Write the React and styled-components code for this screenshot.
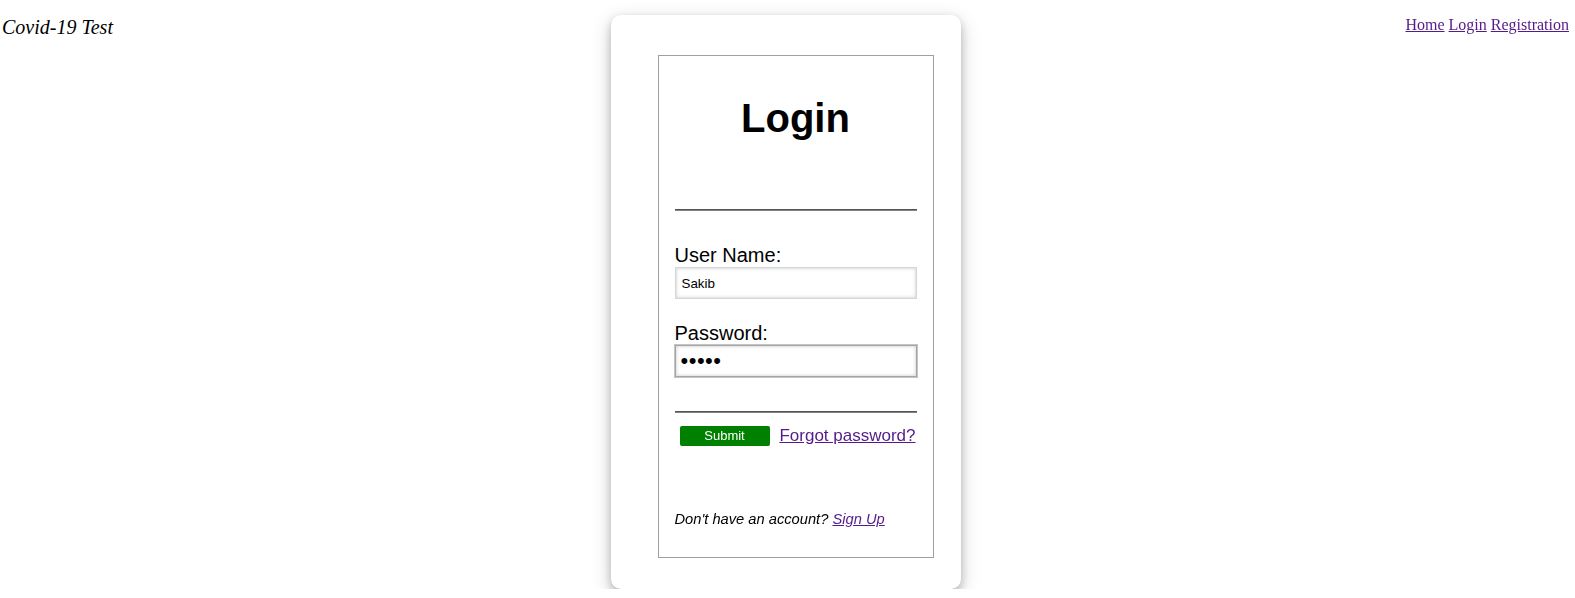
import React from 'react';
import styled, { createGlobalStyle } from 'styled-components';

const GlobalStyle = createGlobalStyle`
  html, body { margin: 0; padding: 0; background: #fff; }
  body {
    font-family: "Liberation Serif", "Times New Roman", serif;
    font-size: 16px;
    color: #000;
  }
  * { box-sizing: border-box; }
`;

const Page = styled.div`
  display: grid;
  grid-template-columns: 1fr 350px 1fr;
  align-items: start;
  padding: 0 6px 0 2px;
`;

const Brand = styled.div`
  font-style: italic;
  font-size: 20px;
  line-height: 23px;
  padding-top: 16px;
`;

const Nav = styled.nav`
  justify-self: end;
  padding-top: 16px;
  font-size: 16px;
  line-height: 18px;
  white-space: nowrap;
`;

const Link = styled.a`
  color: #551a8b;
  text-decoration: underline;
  cursor: pointer;
`;

const Card = styled.main`
  margin-top: 15px;
  background: #fff;
  border-radius: 10px;
  box-shadow: 0 4px 8px 0 rgba(0, 0, 0, 0.2), 0 6px 20px 0 rgba(0, 0, 0, 0.19);
  padding: 40px 27px 31px 47px;
  font-family: "Liberation Sans", Arial, sans-serif;
`;

const Frame = styled.form`
  border: 1px solid #a0a0a0;
  padding: 16px;
  display: flex;
  flex-direction: column;
`;

const Title = styled.h1`
  margin: 23px 0 0;
  font-size: 40px;
  line-height: 46px;
  font-weight: bold;
  text-align: center;
`;

const Rule = styled.hr`
  margin: ${p => p.$top}px 0 0;
  height: 0;
  border: none;
  border-top: 1px solid #555;
  border-bottom: 1px solid #808080;
`;

const Label = styled.label`
  display: block;
  margin-top: ${p => p.$top}px;
  font-size: 20px;
  line-height: 23px;
`;

const Input = styled.input`
  display: block;
  width: 100%;
  height: 32px;
  margin: 0;
  padding: 0 6px;
  font-family: "Liberation Sans", Arial, sans-serif;
  font-size: 13.333px;
  color: #000;
  background: #fff;
  border: 1px solid #d6d6d6;
  box-shadow: inset 0 0 3px 1px #dcdcdc;
  caret-color: #000;
  &:focus {
    outline: 1px solid #c4c4c4;
    border-color: #a6a6a6;
  }
  &[type="password"] {
    font-size: 22px;
    letter-spacing: 0.5px;
    padding: 0 5px;
  }
`;

const Actions = styled.div`
  margin-top: 13px;
  display: flex;
  align-items: center;
  justify-content: space-between;
  padding: 0 1px 0 5px;
`;

const SubmitButton = styled.button`
  width: 90px;
  height: 20px;
  margin: 0;
  padding: 0;
  border: none;
  border-radius: 2px;
  background: #008000;
  color: #fff;
  font-family: "Liberation Sans", Arial, sans-serif;
  font-size: 13px;
  line-height: 20px;
`;

const Forgot = styled(Link)`
  font-size: 17px;
  line-height: 20px;
`;

const Footer = styled.p`
  margin: 65px 0 13px;
  font-size: 14.7px;
  line-height: 17px;
  font-style: italic;
`;

export default function App() {
  return (
    <>
      <GlobalStyle />
      <Page>
        <Brand>Covid-19 Test</Brand>
        <Card>
          <Frame onSubmit={e => e.preventDefault()}>
            <Title>Login</Title>
            <Rule $top={68} />
            <Label $top={33} htmlFor="user">User Name:</Label>
            <Input id="user" type="text" defaultValue="Sakib" />
            <Label $top={23} htmlFor="pass">Password:</Label>
            <Input id="pass" type="password" defaultValue="12345" autoFocus />
            <Rule $top={34} />
            <Actions>
              <SubmitButton type="submit">Submit</SubmitButton>
              <Forgot href="#">Forgot password?</Forgot>
            </Actions>
            <Footer>
              Don't have an account? <Link href="#">Sign Up</Link>
            </Footer>
          </Frame>
        </Card>
        <Nav>
          <Link href="#">Home</Link> <Link href="#">Login</Link> <Link href="#">Registration</Link>
        </Nav>
      </Page>
    </>
  );
}
